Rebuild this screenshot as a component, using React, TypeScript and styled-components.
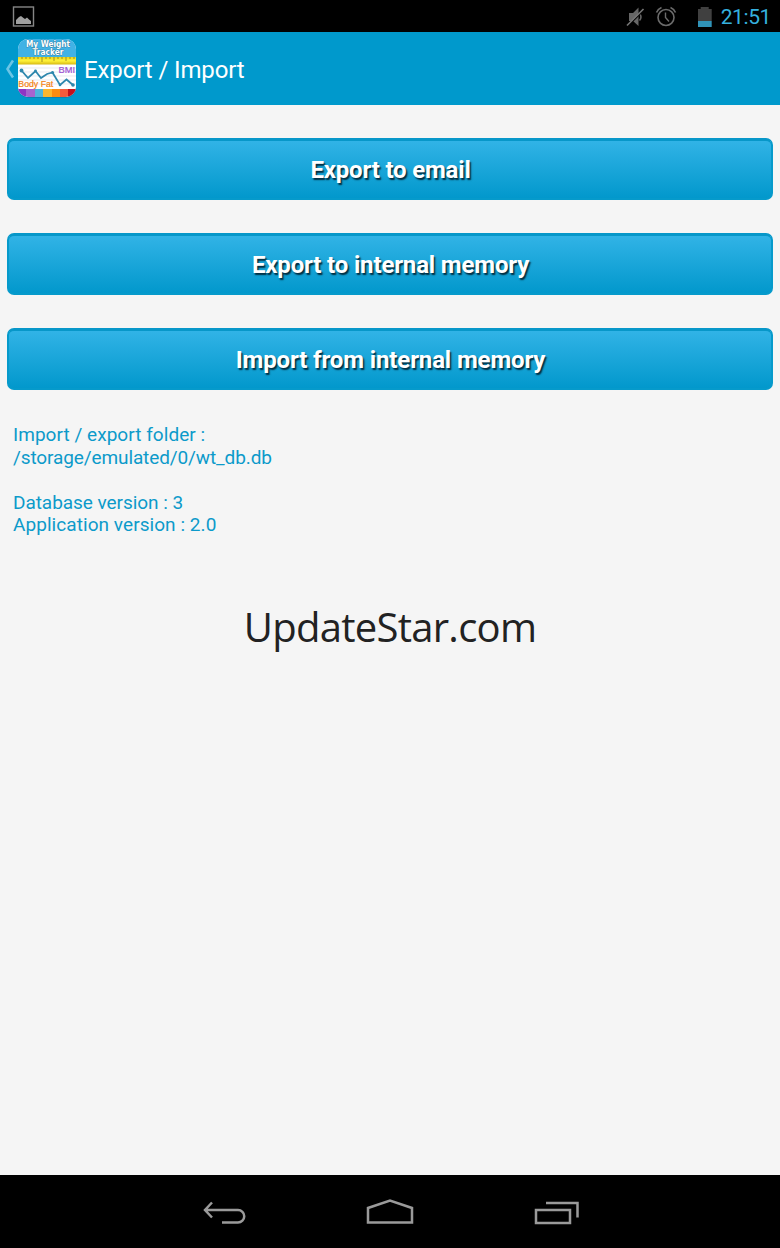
import React from "react";
import styled, { createGlobalStyle } from "styled-components";

const actions = [
  { label: "Export to email", spacing: -0.18 },
  { label: "Export to internal memory", spacing: -0.15 },
  { label: "Import from internal memory", spacing: -0.13 },
];

const swatches = [
  { x: 1, width: 8, color: "#8e35c4" },
  { x: 9, width: 9, color: "#a763cf" },
  { x: 18, width: 8, color: "#4fb4dc" },
  { x: 26, width: 9, color: "#fbb62d" },
  { x: 35, width: 8, color: "#fb8c10" },
  { x: 43, width: 8, color: "#f45a3c" },
  { x: 51, width: 8, color: "#c4101c" },
];

function AppIcon() {
  return (
    <svg width="60" height="62" viewBox="0 0 60 62">
      <defs>
        <clipPath id="icon">
          <rect x="1" y="1" width="58" height="58" rx="10" />
        </clipPath>
        <linearGradient id="ruler" x1="0" y1="0" x2="0" y2="1">
          <stop offset="0" stopColor="#ead51c" />
          <stop offset="0.5" stopColor="#fff23a" />
          <stop offset="1" stopColor="#d6b913" />
        </linearGradient>
      </defs>
      <rect x="1" y="2" width="58" height="58" rx="10" fill="#0884b2" />
      <g clipPath="url(#icon)">
        <rect width="60" height="60" fill="#fff" />
        <rect width="60" height="19.5" fill="#41b2e5" />
        <rect y="19" width="60" height="7.5" fill="url(#ruler)" />
        <path
          d="M5 19v2M9 19v2M13 19v2M17 19v2M21 19v2M25 19v5M29 19v2M33 19v2M37 19v4M41 19v2M45 19v2M49 19v4M53 19v2M57 19v2"
          stroke="#7e6c18"
          strokeWidth="0.7"
        />
        <path d="M0 30h60M0 34h60M0 38h60M0 42h60M0 46h60" stroke="#d8dbe6" strokeWidth="0.6" />
        <IconText x="41.5" y="35" fill="#9d4fd2" stroke="#9d4fd2" textLength="16.5" lengthAdjust="spacingAndGlyphs">
          BMI
        </IconText>
        <path
          d="M4.5 32.5L11 40L18.500 33L24 40L30 36L35.500 34.500L43 47L49.500 41.500L56 47"
          fill="none"
          stroke="#2e87ad"
          strokeWidth="1.8"
        />
        <g fill="#2e87ad">
          <circle cx="4.5" cy="32.5" r="1.9" />
          <circle cx="18.5" cy="33" r="1.4" />
          <circle cx="35.5" cy="34.5" r="1.6" />
          <circle cx="43" cy="47" r="1.3" />
          <circle cx="56" cy="47" r="1.8" />
        </g>
        <IconText x="1.3" y="49" fill="#f4820f" stroke="#f4820f" textLength="35" lengthAdjust="spacingAndGlyphs">
          Body Fat
        </IconText>
        {swatches.map(({ x, width, color }) => (
          <rect key={color} x={x} y="51" width={width} height="9" fill={color} />
        ))}
      </g>
      <IconTitle x="15.5" y="17" textLength="31" lengthAdjust="spacingAndGlyphs">
        Tracker
      </IconTitle>
      <IconTitle x="9" y="9" textLength="44" lengthAdjust="spacingAndGlyphs">
        My Weight
      </IconTitle>
    </svg>
  );
}

function StatusBar() {
  return (
    <Status>
      <svg width="24" height="24" viewBox="0 0 24 24">
        <rect x="1.5" y="2" width="20" height="19" fill="none" stroke="#858585" strokeWidth="1.4" />
        <path d="M4 19v-4l3-3 2-1 2.500 2 1.500 1 2-1.500 2 2 2 1.500v3z" fill="#a0a0a0" />
      </svg>
      <StatusRight>
        <svg width="20" height="22" viewBox="0 0 20 22">
          <path d="M3 7h4L12.500 1.500v18.500L7 15H3z" fill="#666" />
          <path d="M13.500 7.500q3 3.500 0 7" fill="none" stroke="#666" strokeWidth="1.5" />
          <path d="M1.500 20.500L18 4" stroke="#000" strokeWidth="1.200" />
          <path d="M1 19.500L17.500 3" stroke="#777" strokeWidth="1.600" />
        </svg>
        <Alarm width="22" height="22" viewBox="0 0 22 22">
          <circle cx="11" cy="11.5" r="8" strokeWidth="1.6" />
          <path d="M10.500 6.500V11.500l3.500 4" strokeWidth="1.400" />
          <path d="M1.500 6.500Q3 3 6.500 1.500M15.500 1.500Q19 3 20.500 6.500" strokeWidth="1.600" />
        </Alarm>
        <Battery />
        <Clock>21:51</Clock>
      </StatusRight>
    </Status>
  );
}

function App() {
  return (
    <Screen>
      <GlobalStyle />
      <StatusBar />
      <ActionBar>
        <svg width="12" height="24" viewBox="0 0 12 24">
          <path d="M8 3.500Q5 8 2.500 12Q5 16 8 20.500" fill="none" stroke="#6cc5e6" strokeWidth="2.500" />
        </svg>
        <AppIcon />
        <Title>Export / Import</Title>
      </ActionBar>

      <Content>
        {actions.map(({ label, spacing }) => (
          <ActionButton key={label} $spacing={spacing}>
            {label}
          </ActionButton>
        ))}
        <Info>
          <Line $spacing={0.04}>Import / export folder :</Line>
          <Line $spacing={-0.11}>/storage/emulated/0/wt_db.db</Line>
          <br />
          <Line $spacing={-0.05}>Database version : 3</Line>
          <Line $spacing={0.06}>Application version : 2.0</Line>
        </Info>
      </Content>

      <Watermark>UpdateStar.com</Watermark>

      <NavBar>
        <svg width="48" height="32" viewBox="0 0 48 32">
          <path d="M13 6.500L6 14L13 21.500M6 14H39a6.250 6.250 0 0 1 0 12.500H23" />
        </svg>
        <svg width="48" height="32" viewBox="0 0 48 32">
          <path d="M2 26.500V12L24 4.500L46 12V26.500z" />
        </svg>
        <svg width="48" height="32" viewBox="0 0 48 32">
          <path d="M3 14H37V27H3zM13 7H44.500V21.500" />
        </svg>
      </NavBar>
    </Screen>
  );
}

export default App;

const GlobalStyle = createGlobalStyle`
  body {
    margin: 0;
    background: #f5f5f5;
  }

  * {
    box-sizing: border-box;
  }
`;

const Screen = styled.div`
  position: relative;
  display: flex;
  flex-direction: column;
  width: 780px;
  height: 1248px;
  overflow: hidden;
  background: #f5f5f5;
  font-family: Roboto, "Liberation Sans", sans-serif;
`;

const Status = styled.div`
  display: flex;
  justify-content: space-between;
  align-items: center;
  height: 32px;
  padding: 2px 9px 0 12px;
  background: #000;
`;

const StatusRight = styled.div`
  display: flex;
  align-items: center;
`;

const Alarm = styled.svg`
  margin-left: 9px;
  fill: none;
  stroke: #6b6b6b;
`;

const Battery = styled.div`
  width: 14px;
  height: 20px;
  margin: 0 9px 0 21px;
  background: linear-gradient(#404040 68%, #3093b8 68%);
  clip-path: polygon(0 2px, 3px 2px, 3px 0, 11px 0, 11px 2px, 100% 2px, 100% 100%, 0 100%);
`;

const Clock = styled.div`
  font-size: 21px;
  line-height: 24px;
  letter-spacing: -0.4px;
  color: #35b0de;
`;

const ActionBar = styled.div`
  display: flex;
  align-items: center;
  height: 73px;
  padding-left: 5px;
  background: #0099cc;
`;

const IconText = styled.text`
  font-family: "Liberation Sans", sans-serif;
  font-size: 9px;
  stroke-width: 0.2px;
`;

const IconTitle = styled.text`
  font-family: "DejaVu Sans", sans-serif;
  font-size: 8.5px;
  font-weight: bold;
  fill: #fff;
  stroke: #28617c;
  stroke-width: 0.6px;
  paint-order: stroke;
`;

const Title = styled.div`
  margin-left: 7px;
  padding-top: 3px;
  font-size: 24px;
  letter-spacing: -0.12px;
  color: #fff;
`;

const Content = styled.div`
  display: flex;
  flex: 1;
  flex-direction: column;
  gap: 33px;
  padding: 33px 7px 0;
`;

const ActionButton = styled.button<{ $spacing: number }>`
  width: 100%;
  height: 62px;
  padding: 1px 0 0 1px;
  border: 2px solid #069acb;
  border-top: 3px solid #0797c9;
  border-radius: 7px;
  background: linear-gradient(#31b3e6, #0298cc);
  color: #fff;
  font-family: inherit;
  font-size: 24px;
  font-weight: 700;
  letter-spacing: ${({ $spacing }) => $spacing}px;
  text-shadow: 1.5px 1.5px 1.5px #002b3d;
`;

const Info = styled.div`
  padding: 1px 0 0 6px;
  font-size: 19px;
  line-height: 22.5px;
  color: #0c9aca;
`;

const Line = styled.div<{ $spacing: number }>`
  letter-spacing: ${({ $spacing }) => $spacing}px;
`;

const Watermark = styled.div`
  position: absolute;
  top: 597px;
  left: 0;
  width: 100%;
  font-family: "Open Sans", "Noto Sans", sans-serif;
  font-size: 40px;
  line-height: 60px;
  letter-spacing: -0.72px;
  text-align: center;
  color: #222;
`;

const NavBar = styled.div`
  display: flex;
  justify-content: center;
  align-items: center;
  gap: 119px;
  height: 73px;
  padding-top: 1px;
  background: #000;

  path {
    fill: none;
    stroke: #9a9a9a;
    stroke-width: 2.5;
  }
`;
